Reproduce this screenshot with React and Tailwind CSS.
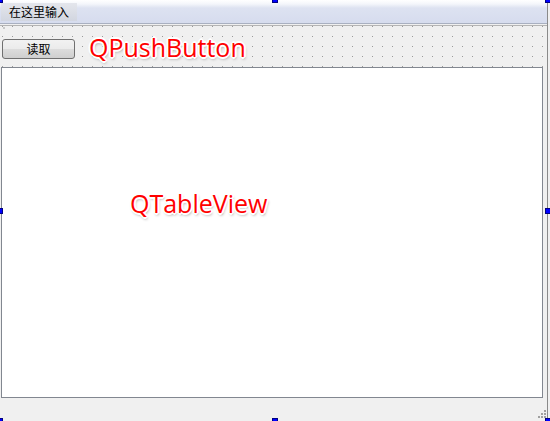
import React from 'react'

const Handle = ({ className }) => (
  <div className={`absolute w-[6px] h-[6px] bg-[#0000ff] border border-[#000080] ${className}`}></div>
)

const haloText = '[text-shadow:1px_1px_0_#fff,-1px_-1px_0_#fff,1px_-1px_0_#fff,-1px_1px_0_#fff,0_2px_0_#fff,2px_0_0_#fff,-2px_0_0_#fff,0_-2px_0_#fff,1px_2px_3px_#888]'

const App = () => {
  return (
    <div className="relative w-[550px] h-[421px] overflow-hidden bg-[#f0f0f0] font-['Noto_Sans_CJK_SC',sans-serif]">
      <div className="w-[548px] h-[421px] flex flex-col border-r border-[#8a8a8a] bg-[#f0f0f0]">
        {/* menu bar */}
        <div className="h-[24px] shrink-0 bg-[linear-gradient(#ffffff_0px,#f4f6fb_4px,#dde2f1_8px,#d6dcee_23px)] border-b border-[#a9b0c0] pt-[3px] pl-[1px]">
          <div className="w-[76px] h-[18px] bg-[linear-gradient(#e4e6ec,#d2d6e0)] flex items-center pl-[8px] text-[12px] leading-none text-black">
            在这里输入
          </div>
        </div>
        {/* toolbar area with form grid */}
        <div className="relative h-[42px] shrink-0 mt-[1px] border-t border-[#b4b4b4] bg-[#f0f0f0] bg-[radial-gradient(circle_at_0.5px_0.5px,#9a9a9a_0.8px,transparent_0.9px)] bg-size-[10px_10px] bg-position-[2px_10px]">
          <div className="absolute left-[3px] top-[1px] w-[2px] h-[2px] bg-[#c8c8c8]"></div>
          <div className="flex items-center pt-[12px] pl-[2px] gap-[14px]">
            <button className="w-[73px] h-[20px] rounded-[3px] border border-[#707070] bg-[linear-gradient(#f2f2f2_0%,#ebebeb_50%,#dddddd_50%,#cfcfcf_100%)] text-[12px] leading-none text-black flex items-center justify-center">
              读取
            </button>
            <span className={`text-[25px] leading-none text-[#ff0000] font-['Open_Sans',sans-serif] -mt-[3px] ${haloText}`}>
              QPushButton
            </span>
          </div>
        </div>
        {/* table view */}
        <div className="relative ml-[1px] w-[542px] h-[331px] shrink-0 bg-white border border-[#828790]">
          <span className={`absolute left-[128px] top-[123px] text-[25px] leading-none text-[#ff0000] font-['Open_Sans',sans-serif] ${haloText}`}>
            QTableView
          </span>
        </div>
        {/* bottom area */}
        <div className="relative flex-1 bg-[#f0f0f0]">
          <div className="absolute right-[1px] bottom-[3px] grid grid-cols-3 gap-[1px]">
            <div></div><div></div><div className="w-[2px] h-[2px] bg-[#a0a0a0]"></div>
            <div></div><div className="w-[2px] h-[2px] bg-[#a0a0a0]"></div><div className="w-[2px] h-[2px] bg-[#a0a0a0]"></div>
            <div className="w-[2px] h-[2px] bg-[#a0a0a0]"></div><div className="w-[2px] h-[2px] bg-[#a0a0a0]"></div><div className="w-[2px] h-[2px] bg-[#a0a0a0]"></div>
          </div>
        </div>
      </div>
      <Handle className="left-[-3px] top-[-3px]" />
      <Handle className="left-[272px] top-[-3px]" />
      <Handle className="left-[545px] top-[-3px]" />
      <Handle className="left-[-3px] top-[208px]" />
      <Handle className="left-[545px] top-[208px]" />
      <Handle className="left-[-3px] top-[418px]" />
      <Handle className="left-[272px] top-[418px]" />
      <Handle className="left-[545px] top-[418px]" />
    </div>
  )
}

export default App
